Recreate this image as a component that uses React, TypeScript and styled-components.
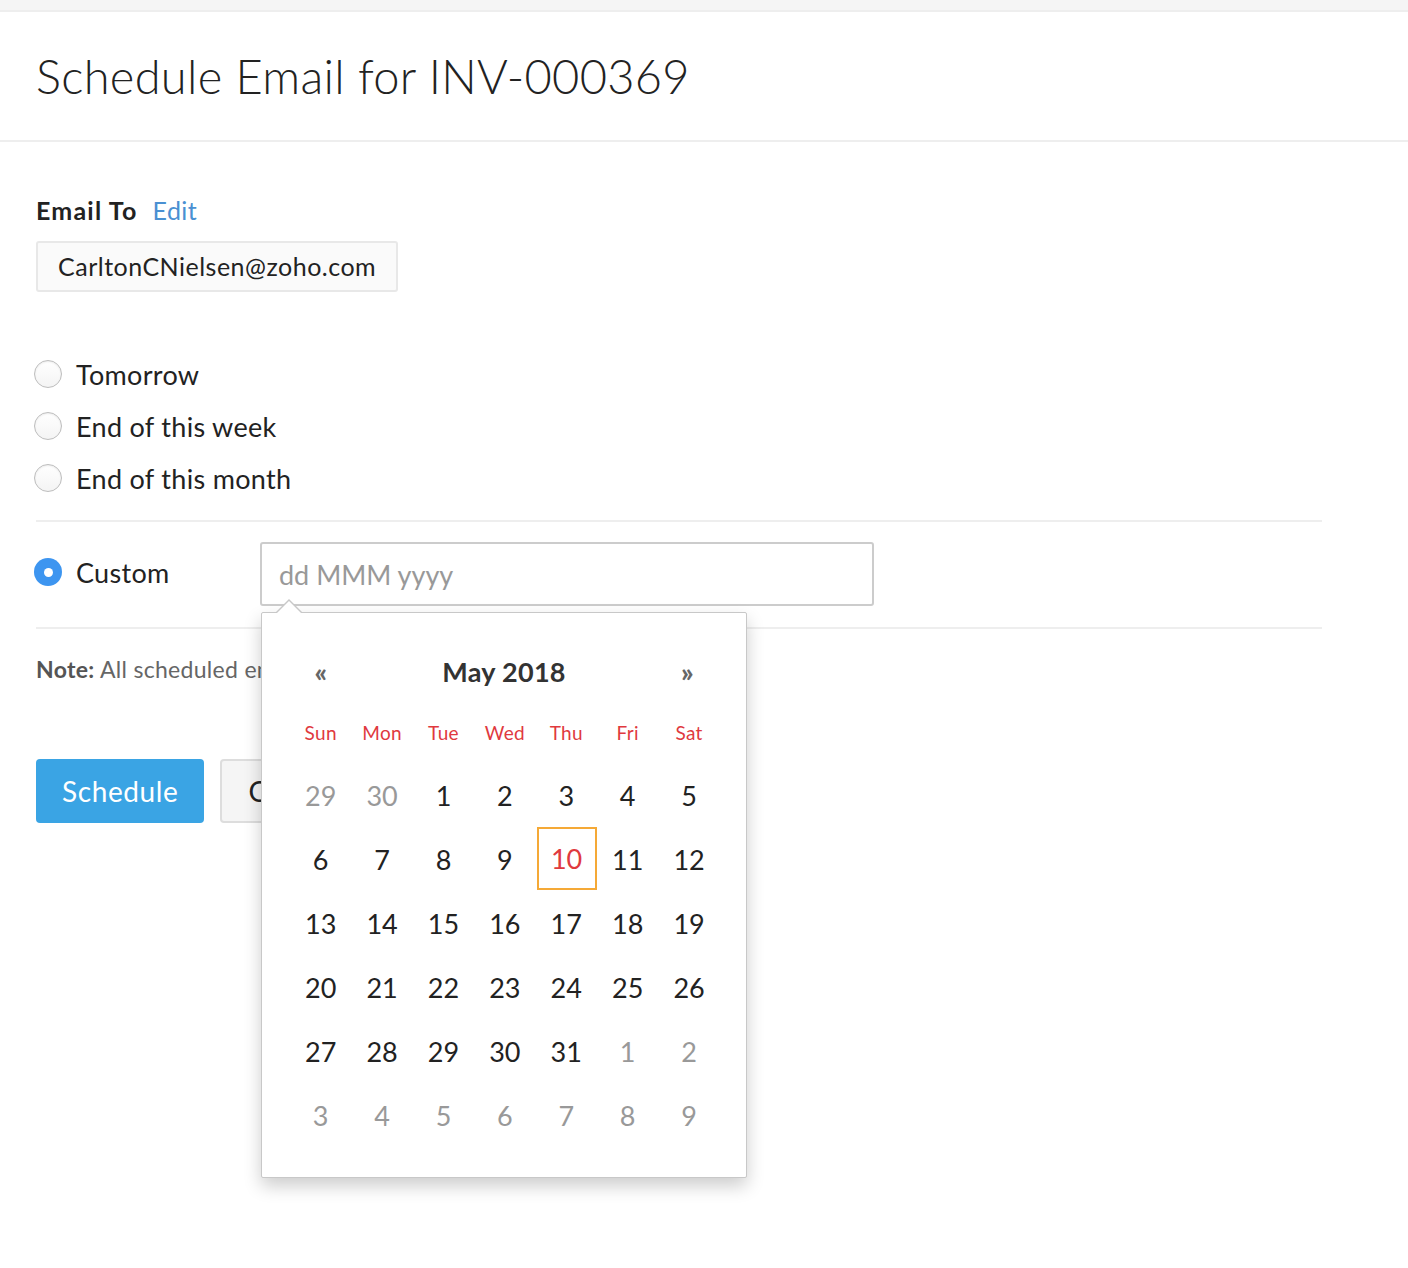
import React from 'react';
import styled, { createGlobalStyle } from 'styled-components';

const GlobalStyle = createGlobalStyle`
  body {
    margin: 0;
    background: #fff;
    font-family: Lato, "Open Sans", sans-serif;
    color: #222;
  }
`;

const Page = styled.div`
  min-height: 100vh;
  position: relative;
`;

const TopStrip = styled.div`
  height: 10px;
  background: #f5f5f5;
  border-bottom: 2px solid #eee;
`;

const Header = styled.header`
  height: 128px;
  display: flex;
  align-items: center;
  padding-left: 36px;
  border-bottom: 2px solid #eee;
`;

const Title = styled.h1`
  margin: 0;
  font-size: 47px;
  font-weight: 300;
  color: #222;
  letter-spacing: 0.3px;
`;

const Content = styled.main`
  padding: 53px 86px 0 36px;
`;

const Label = styled.div`
  font-size: 25px;
  line-height: 30px;
  font-weight: 700;
  letter-spacing: 1.2px;
  color: #222;
  display: flex;
  gap: 15px;
`;

const EditLink = styled.a`
  color: #4a90d2;
  font-weight: 400;
  letter-spacing: 0.4px;
  cursor: pointer;
`;

const EmailChip = styled.div`
  display: inline-block;
  margin-top: 16px;
  padding: 0 20px;
  height: 47px;
  line-height: 47px;
  background: #fafafa;
  border: 2px solid #e8e8e8;
  border-radius: 3px;
  font-size: 25px;
  letter-spacing: 0.5px;
  color: #222;
`;

const RadioList = styled.div`
  margin-top: 56px;
  display: flex;
  flex-direction: column;
`;

const RadioRow = styled.label`
  display: flex;
  align-items: center;
  gap: 14px;
  height: 52px;
  font-size: 27px;
  letter-spacing: 0.3px;
  color: #222;
  cursor: pointer;
`;

const RadioDot = styled.span<{ $checked?: boolean }>`
  box-sizing: border-box;
  width: 28px;
  height: 28px;
  border-radius: 50%;
  margin-left: -2px;
  flex-shrink: 0;
  background: ${(p) => (p.$checked ? '#3d95f0' : 'linear-gradient(#fff, #f4f4f4)')};
  border: ${(p) => (p.$checked ? 'none' : '1.5px solid #bdbdbd')};
  box-shadow: ${(p) => (p.$checked ? 'none' : 'inset 0 1px 2px rgba(0,0,0,0.08)')};
  display: flex;
  align-items: center;
  justify-content: center;
  &::after {
    content: '';
    display: ${(p) => (p.$checked ? 'block' : 'none')};
    width: 9px;
    height: 9px;
    border-radius: 50%;
    background: #fff;
  }
`;

const Divider = styled.hr<{ $gap?: number }>`
  margin: ${(p) => p.$gap || 0}px 0 0;
  border: none;
  border-top: 2px solid #eee;
`;

const CustomRow = styled.div`
  display: flex;
  align-items: center;
  padding: 20px 0 21px;
`;

const CustomLabel = styled(RadioRow)`
  width: 224px;
  align-self: flex-start;
  height: 60px;
`;

const DateField = styled.div`
  position: relative;
`;

const DateInput = styled.input`
  box-sizing: border-box;
  width: 614px;
  height: 64px;
  border: 2px solid #ccc;
  border-radius: 3px;
  padding: 0 17px;
  font-family: Lato, "Open Sans", sans-serif;
  font-size: 27px;
  color: #222;
  outline: none;
  &::placeholder {
    color: #999;
  }
`;

const Popup = styled.div`
  position: absolute;
  top: 70px;
  left: 1px;
  box-sizing: border-box;
  width: 486px;
  height: 566px;
  background: #fff;
  border: 1px solid #c8c8c8;
  border-radius: 2px;
  box-shadow: 0 8px 18px rgba(0, 0, 0, 0.2);
  padding: 28px 28px 0;
  z-index: 5;
  &::before,
  &::after {
    content: '';
    position: absolute;
    border-style: solid;
    border-color: transparent;
  }
  &::before {
    top: -14px;
    left: 13px;
    border-width: 0 14px 14px;
    border-bottom-color: #c8c8c8;
  }
  &::after {
    top: -12px;
    left: 14px;
    border-width: 0 13px 13px;
    border-bottom-color: #fff;
  }
`;

const Grid = styled.div`
  display: grid;
  grid-template-columns: repeat(7, 61.4px);
`;

const MonthBar = styled.div`
  display: grid;
  grid-template-columns: 61.4px 1fr 61.4px;
  align-items: center;
  height: 60px;
`;

const Arrow = styled.span`
  text-align: center;
  font-size: 27px;
  font-weight: 900;
  color: #666;
  cursor: pointer;
`;

const MonthTitle = styled.div`
  text-align: center;
  font-size: 27px;
  font-weight: 700;
  letter-spacing: 0.3px;
  color: #333;
`;

const DayName = styled.div`
  height: 62px;
  display: flex;
  align-items: center;
  justify-content: center;
  font-size: 19px;
  letter-spacing: 0.3px;
  color: #e0393e;
`;

const DateCell = styled.div<{ $muted?: boolean; $today?: boolean }>`
  box-sizing: border-box;
  display: flex;
  align-items: center;
  justify-content: center;
  font-size: 27px;
  color: ${(p) => (p.$today ? '#e0393e' : p.$muted ? '#999' : '#222')};
  border: 2px solid ${(p) => (p.$today ? '#f5a936' : 'transparent')};
  margin: ${(p) => (p.$today ? '0 0 1px 1px' : '0')};
  height: ${(p) => (p.$today ? '63px' : '64px')};
  width: ${(p) => (p.$today ? '60px' : 'auto')};
  cursor: pointer;
`;

const Note = styled.p`
  margin: 25px 0 0;
  font-size: 23px;
  line-height: 30px;
  letter-spacing: 0.3px;
  color: #666;
  b {
    color: #555;
    font-weight: 700;
  }
`;

const Actions = styled.div`
  display: flex;
  gap: 16px;
  margin-top: 75px;
`;

const Button = styled.button<{ $primary?: boolean }>`
  height: 64px;
  padding: 0 26px;
  border-radius: 4px;
  font-family: Lato, "Open Sans", sans-serif;
  font-size: 28px;
  letter-spacing: 0.6px;
  cursor: pointer;
  background: ${(p) => (p.$primary ? '#3aa4e4' : '#f5f5f5')};
  color: ${(p) => (p.$primary ? '#fff' : '#222')};
  border: ${(p) => (p.$primary ? 'none' : '2px solid #ddd')};
`;

const DAYS = ['Sun', 'Mon', 'Tue', 'Wed', 'Thu', 'Fri', 'Sat'];

const buildDates = () => {
  const cells: { d: number; muted: boolean }[] = [];
  cells.push({ d: 29, muted: true }, { d: 30, muted: true });
  for (let i = 1; i <= 31; i++) cells.push({ d: i, muted: false });
  let n = 1;
  while (cells.length < 42) cells.push({ d: n++, muted: true });
  return cells;
};

const Radio = ({ label, checked }: { label: string; checked?: boolean }) => (
  <RadioRow>
    <RadioDot $checked={checked} />
    {label}
  </RadioRow>
);

const App = () => {
  const dates = buildDates();
  return (
    <Page>
      <GlobalStyle />
      <TopStrip />
      <Header>
        <Title>Schedule Email for INV-000369</Title>
      </Header>
      <Content>
        <Label>
          Email To <EditLink>Edit</EditLink>
        </Label>
        <EmailChip>CarltonCNielsen@zoho.com</EmailChip>

        <RadioList>
          <Radio label="Tomorrow" />
          <Radio label="End of this week" />
          <Radio label="End of this month" />
        </RadioList>
        <Divider $gap={16} />

        <CustomRow>
          <CustomLabel>
            <RadioDot $checked />
            Custom
          </CustomLabel>
          <DateField>
            <DateInput placeholder="dd MMM yyyy" />
            <Popup>
              <MonthBar>
                <Arrow>«</Arrow>
                <MonthTitle>May 2018</MonthTitle>
                <Arrow>»</Arrow>
              </MonthBar>
              <Grid>
                {DAYS.map((d) => (
                  <DayName key={d}>{d}</DayName>
                ))}
                {dates.map((c, i) => (
                  <DateCell key={i} $muted={c.muted} $today={!c.muted && c.d === 10}>
                    {c.d}
                  </DateCell>
                ))}
              </Grid>
            </Popup>
          </DateField>
        </CustomRow>
        <Divider />

        <Note>
          <b>Note:</b> All scheduled emails will be sent at 8 AM.
        </Note>

        <Actions>
          <Button $primary>Schedule</Button>
          <Button>Cancel</Button>
        </Actions>
      </Content>
    </Page>
  );
};

export default App;
